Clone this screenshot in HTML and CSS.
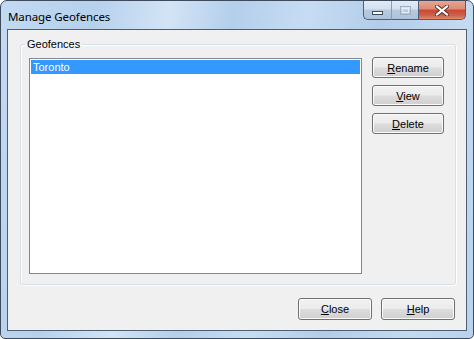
FILE: index.html
```html
<!DOCTYPE html>
<html>
<head>
    <title>Manage Geofences</title>
    <link rel="stylesheet" href="styles.css">
</head>
<body>
    <div class="window">
        <div class="titlebar">
            <span class="title">Manage Geofences</span>
            <div class="caption-buttons">
                <div class="cap min">
                    <svg width="12" height="6" viewBox="0 0 12 6"><rect x="0.5" y="1.5" width="10" height="3" fill="#fff" stroke="#3b4a5c"/></svg>
                </div>
                <div class="cap max">
                    <svg width="11" height="9" viewBox="0 0 11 9"><rect x="0.5" y="0.5" width="10" height="8" fill="none" stroke="#9fb0c4"/><rect x="2.5" y="2.5" width="6" height="4" fill="none" stroke="#e6eef7"/></svg>
                </div>
                <div class="cap close">
                    <svg width="14" height="11" viewBox="0 0 14 11"><path d="M2 1.5 L12 9.5 M12 1.5 L2 9.5" stroke="#5a2a22" stroke-width="4" stroke-linecap="square"/><path d="M2 1.5 L12 9.5 M12 1.5 L2 9.5" stroke="#fff" stroke-width="2.2" stroke-linecap="square"/></svg>
                </div>
            </div>
        </div>

        <div class="client">
            <fieldset class="group">
                <legend>Geofences</legend>
                <div class="group-body">
                    <div class="listbox">
                        <div class="item selected">Toronto</div>
                    </div>
                    <div class="side-buttons">
                        <button class="button"><u>R</u>ename</button>
                        <button class="button"><u>V</u>iew</button>
                        <button class="button"><u>D</u>elete</button>
                    </div>
                </div>
            </fieldset>

            <div class="footer">
                <button class="button wide"><u>C</u>lose</button>
                <button class="button wide"><u>H</u>elp</button>
            </div>
        </div>
    </div>
</body>
</html>
```

FILE: styles.css
```css
body {
    margin: 0;
    background-color: #ffffff;
    font-family: "Liberation Sans", Arial, sans-serif;
    font-size: 11px;
}

.window {
    width: 474px;
    height: 339px;
    box-sizing: border-box;
    border: 1px solid #3d4b5c;
    border-radius: 7px 7px 5px 5px;
    padding: 0 6px 7px 6px;
    background: linear-gradient(100deg, #c2daf2 0%, #b6d1ec 18%, #d2e4f6 32%, #b4cfeb 44%, #c6dcf3 58%, #b3cde9 72%, #c4daf1 88%, #b9d2ec 100%);
    position: relative;
    display: flex;
    flex-direction: column;
}

.titlebar {
    height: 28px;
    display: flex;
    align-items: center;
}

.title {
    font-family: "Segoe UI", "Noto Sans", sans-serif;
    font-size: 11.5px;
    letter-spacing: -0.1px;
    color: #000;
    margin-left: 1px;
    margin-top: 2px;
}

.caption-buttons {
    position: absolute;
    top: 0;
    right: 7px;
    display: flex;
    height: 19px;
}

.cap {
    height: 18px;
    display: flex;
    align-items: center;
    justify-content: center;
    border: 1px solid #4d5f74;
    border-top: none;
}

.min {
    width: 27px;
    border-right: none;
    border-radius: 0 0 0 5px;
    background: linear-gradient(#e2ebf6 0%, #d2e0ef 45%, #b7cadf 50%, #aec3da 100%);
}

.min svg {
    margin-top: 6px;
}

.max {
    width: 26px;
    border-left: 1px solid #8a9cb1;
    border-right: none;
    background: linear-gradient(#e2ebf6 0%, #d2e0ef 45%, #b7cadf 50%, #aec3da 100%);
}

.close {
    width: 46px;
    border-radius: 0 0 5px 0;
    background: linear-gradient(#e9a593 0%, #dc8a75 45%, #c64a34 50%, #cf614a 80%, #de8c6f 100%);
}

.client {
    flex: 1;
    background-color: #f0f0f0;
    border: 1px solid #4e5f72;
    display: flex;
    flex-direction: column;
}

.group {
    margin: 8px 10px 0 12px;
    padding: 7px 11px 10px 8px;
    border: 1px solid #d5dfe5;
    border-radius: 3px;
    box-shadow: 1px 1px 0 #ffffff, inset 1px 1px 0 #ffffff;
    min-width: 0;
}

.group legend {
    padding: 0 2px;
    margin-left: -4px;
    line-height: 13px;
    color: #000;
}

.group-body {
    display: flex;
    gap: 10px;
}

.listbox {
    flex: 1;
    height: 216px;
    box-sizing: border-box;
    border: 1px solid #828790;
    background-color: #fff;
    padding: 1px;
}

.item {
    height: 14px;
    line-height: 14px;
    padding-left: 2px;
}

.item.selected {
    background-color: #3399ff;
    color: #fff;
}

.side-buttons {
    display: flex;
    flex-direction: column;
    gap: 7px;
    margin-top: -1px;
}

.button {
    width: 72px;
    height: 21px;
    padding: 0;
    border: 1px solid #707070;
    border-radius: 3px;
    background: linear-gradient(#f2f2f2 0%, #ebebeb 48%, #dddddd 52%, #cfcfcf 100%);
    box-shadow: inset 0 0 0 1px #fbfbfb;
    font-family: "Liberation Sans", Arial, sans-serif;
    font-size: 11px;
    color: #000;
}

.footer {
    display: flex;
    justify-content: flex-end;
    gap: 9px;
    margin: 13px 11px 0 0;
}

.button.wide {
    width: 74px;
    height: 22px;
}
```
